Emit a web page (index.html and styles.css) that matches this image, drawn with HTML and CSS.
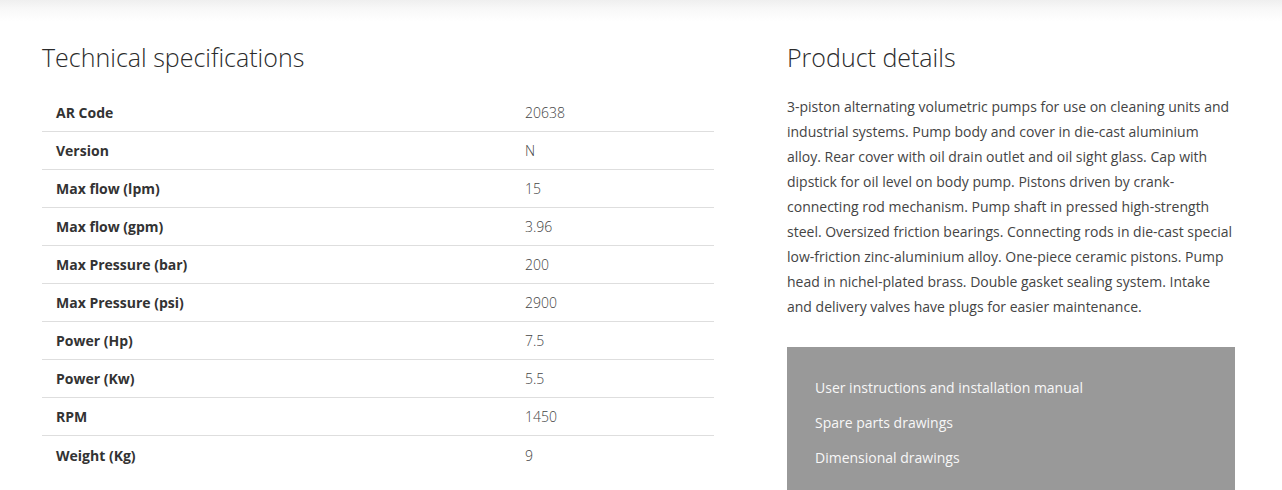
FILE: index.html
```html
<!DOCTYPE html>
<html lang="en">
<head>
<meta charset="utf-8">
<title>Product</title>
<link rel="stylesheet" href="styles.css">
</head>
<body>
<div class="topshade"></div>
<main class="page">
  <section class="specs">
    <h2 class="title">Technical specifications</h2>
    <div class="spec-table">
      <div class="row"><div class="label">AR Code</div><div class="value">20638</div></div>
      <div class="row"><div class="label">Version</div><div class="value">N</div></div>
      <div class="row"><div class="label">Max flow (lpm)</div><div class="value">15</div></div>
      <div class="row"><div class="label">Max flow (gpm)</div><div class="value">3.96</div></div>
      <div class="row"><div class="label">Max Pressure (bar)</div><div class="value">200</div></div>
      <div class="row"><div class="label">Max Pressure (psi)</div><div class="value">2900</div></div>
      <div class="row"><div class="label">Power (Hp)</div><div class="value">7.5</div></div>
      <div class="row"><div class="label">Power (Kw)</div><div class="value">5.5</div></div>
      <div class="row"><div class="label">RPM</div><div class="value">1450</div></div>
      <div class="row"><div class="label">Weight (Kg)</div><div class="value">9</div></div>
    </div>
  </section>
  <section class="details">
    <h2 class="title">Product details</h2>
    <p class="desc">3-piston alternating volumetric pumps for use on cleaning units and industrial systems. Pump body and cover in die-cast aluminium alloy. Rear cover with oil drain outlet and oil sight glass. Cap with dipstick for oil level on body pump. Pistons driven by crank-connecting rod mechanism. Pump shaft in pressed high-strength steel. Oversized friction bearings. Connecting rods in die-cast special low-friction zinc-aluminium alloy. One-piece ceramic pistons. Pump head in nichel-plated brass. Double gasket sealing system. Intake and delivery valves have plugs for easier maintenance.</p>
    <ul class="downloads">
      <li><a href="#">User instructions and installation manual</a></li>
      <li><a href="#">Spare parts drawings</a></li>
      <li><a href="#">Dimensional drawings</a></li>
    </ul>
  </section>
</main>
</body>
</html>
```
FILE: styles.css
```css
* { box-sizing: border-box; }
html, body { margin: 0; padding: 0; background: #fff; }
body {
  font-family: "Open Sans", "Liberation Sans", sans-serif;
  font-size: 14px;
  color: #333;
  overflow: hidden;
}
.topshade {
  height: 22px;
  background: linear-gradient(to bottom, #efefef 0%, #f8f8f8 40%, #ffffff 100%);
}
.page {
  display: flex;
  padding: 20px 42px 0 42px;
  gap: 73px;
}
.specs { width: 672px; flex: none; }
.details { width: 448px; flex: none; }
.title {
  margin: 0 0 22px 0;
  font-size: 25px;
  line-height: 30px;
  font-weight: 300;
  color: #2b2b2b;
}
.spec-table { display: flex; flex-direction: column; }
.row {
  display: grid;
  grid-template-columns: 469px 1fr;
  height: 38px;
  align-items: center;
  border-bottom: 1px solid #dedede;
}
.row:last-child { border-bottom: none; }
.label {
  padding: 0 14px;
  font-weight: 700;
  color: #333;
}
.value {
  padding: 0 14px;
  font-weight: 300;
  color: #444;
}
.desc {
  margin: 0;
  line-height: 25px;
  color: #444;
}
.downloads {
  list-style: none;
  margin: 28px 0 0 0;
  padding: 23px 28px 30px 28px;
  background: #999999;
}
.downloads li { line-height: 35px; }
.downloads a {
  color: #f7f7f7;
  text-decoration: none;
  font-size: 14px;
}
```
